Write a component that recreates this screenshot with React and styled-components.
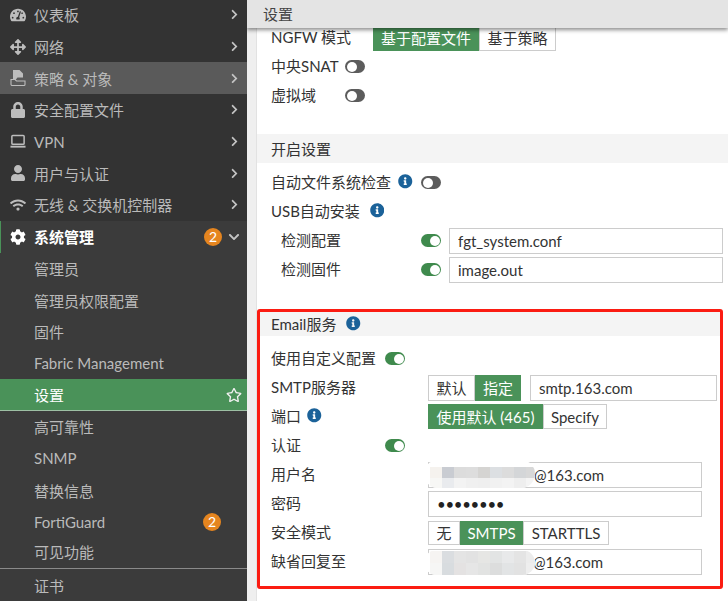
import React from 'react'
import styled, { createGlobalStyle } from 'styled-components'
import { FaTachometerAlt, FaArrowsAlt, FaLock, FaUser, FaWifi, FaCog, FaChevronRight, FaChevronDown, FaInfoCircle, FaRegStar } from 'react-icons/fa'

const Global = createGlobalStyle`
    html, body {
        margin: 0;
        height: 100%;
        overflow: hidden;
        background: #fff;
    }
    body, input {
        font-family: Lato, "Noto Sans CJK SC", sans-serif;
        font-size: 15px;
    }
`
const Page = styled.div`
    display: flex;
    width: 728px;
    height: 601px;
    overflow: hidden;
`
const Sidebar = styled.nav`
    width: 247px;
    flex: none;
    height: 601px;
    overflow: hidden;
    background: #333;
    color: #bababa;
`
const TopList = styled.div`
    margin-top: -1px;
`
const SubList = styled.div`
    background: #3b3b3b;
    padding-bottom: 40px;
`
const Item = styled.div`
    display: flex;
    align-items: center;
    box-sizing: border-box;
    height: 31.7px;
    padding-left: ${p => (p.$sub ? '34px' : '0')};
    padding-bottom: ${p => (p.$line ? '3px' : '0')};
    background: ${p => (p.$hover ? '#5a5a5a' : p.$active ? '#4a9259' : 'transparent')};
    color: ${p => (p.$active || p.$open ? '#fff' : 'inherit')};
    font-weight: ${p => (p.$open ? 700 : 400)};
    border-left: ${p => (p.$open ? '1px solid #4a9259' : 'none')};
    border-bottom: ${p => (p.$active ? '1px solid #9dbfa4' : p.$line ? '1px solid #8a8a8a' : 'none')};
`
const IconSlot = styled.span`
    width: 16px;
    margin-left: ${p => (p.$open ? '9px' : '10px')};
    margin-right: 8px;
    display: flex;
    justify-content: center;
    color: ${p => (p.$open ? '#fff' : '#bdbdbd')};
`
const ItemText = styled.span`
    flex: 1;
    white-space: nowrap;
`
const Badge = styled.span`
    width: 18px;
    height: 18px;
    border-radius: 50%;
    background: #e5851f;
    color: #fff;
    font-size: 14px;
    line-height: 18px;
    text-align: center;
    font-weight: 400;
    margin-right: ${p => (p.$plain ? '26px' : '5px')};
`
const Arrow = styled.span`
    width: 14px;
    margin-right: 6px;
    display: flex;
    justify-content: center;
    color: #c4c4c4;
`
const StarSlot = styled.span`
    margin-right: 5px;
    display: flex;
    color: #f2f2f2;
`
const Main = styled.main`
    flex: 1;
    min-width: 0;
    height: 601px;
    overflow: hidden;
    background: #efefef;
    color: #333;
`
const Header = styled.header`
    position: relative;
    z-index: 1;
    height: 28px;
    line-height: 28px;
    padding-left: 16px;
    background: #e4e4e4;
    color: #444;
    box-shadow: 0 2px 4px rgba(0, 0, 0, 0.45);
`
const Body = styled.div`
    margin-top: -5px;
    margin-left: 9px;
    height: 578px;
    background: #fff;
    border-left: 1px solid #e2e2e2;
`
const Rows = styled.div`
    padding-left: 14px;
    padding-right: 5px;
`
const Row = styled.div`
    display: flex;
    align-items: center;
    height: 29px;
    padding-left: ${p => p.$indent || 0}px;
`
const Label = styled.span`
    width: ${p => p.$w}px;
    flex: none;
    margin-top: -3px;
    white-space: nowrap;
    display: flex;
    align-items: center;
    gap: ${p => p.$gap || 0}px;
`
const SectionBar = styled.div`
    display: flex;
    align-items: center;
    box-sizing: border-box;
    height: ${p => p.$h}px;
    margin-top: ${p => p.$top || 0}px;
    padding-left: ${p => p.$pad}px;
    padding-bottom: ${p => p.$lift || 0}px;
    margin-bottom: 5px;
    background: #f4f4f4;
    gap: 10px;
`
const EmailBox = styled.section`
    margin: 25px 5px 0 0;
    border: 3px solid #fb1c12;
    border-radius: 3px;
    padding-bottom: 10px;
`
const EmailRows = styled.div`
    padding: 3px 0 0 11px;
`
const Info = styled(FaInfoCircle)`
    color: #1b6299;
    font-size: 14.5px;
    flex: none;
    margin-top: 1px;
`
const Toggle = styled.span`
    position: relative;
    display: block;
    flex: none;
    box-sizing: border-box;
    width: 20px;
    height: 13px;
    border-radius: 7px;
    background: ${p => (p.$on ? '#3f8a4d' : '#5c5c5c')};
    &::after {
        content: '';
        position: absolute;
        top: 1.5px;
        left: ${p => (p.$on ? '9px' : '1.5px')};
        width: 10px;
        height: 10px;
        border-radius: 50%;
        background: #fff;
    }
`
const Group = styled.div`
    display: flex;
    align-self: center;
    height: ${p => p.$h || 26}px;
    box-sizing: border-box;
`
const Seg = styled.span`
    display: flex;
    align-items: center;
    justify-content: center;
    box-sizing: border-box;
    width: ${p => p.$w}px;
    background: ${p => (p.$on ? '#4a9259' : '#fff')};
    color: ${p => (p.$on ? '#fff' : '#333')};
    border: 1px solid ${p => (p.$on ? '#4a9259' : '#ccc')};
    white-space: nowrap;
`
const Field = styled.div`
    position: relative;
    flex: none;
    width: ${p => p.$w}px;
    margin-left: ${p => p.$left || 0}px;
`
const Input = styled.input`
    display: block;
    width: 100%;
    height: 26px;
    box-sizing: border-box;
    border: 1px solid #ccc;
    border-radius: 0;
    outline: none;
    padding: 0 8px 0 ${p => p.$pad || 8}px;
    color: ${p => (p.type === 'password' ? '#222' : '#333')};
    background: #fff;
    letter-spacing: ${p => (p.type === 'password' ? '-0.3px' : '0')};
`
const Blob = styled.div`
    position: absolute;
    left: -4px;
    top: ${p => p.$top}px;
    width: 111px;
    height: ${p => p.$h}px;
    box-sizing: border-box;
    padding: ${p => p.$pad}px 0 0 6px;
    background: #fff;
    border-radius: 14px;
    overflow: hidden;
`
const MosaicGrid = styled.div`
    display: grid;
    grid-template-columns: repeat(9, 12px);
    grid-auto-rows: ${p => p.$cell}px;
`
const Cell = styled.span`
    background: ${p => p.$c};
`

const PolicyIcon = () => (
    <svg width="16" height="16" viewBox="0 0 16 16" fill="none">
        <path d="M3 0h6.5L13 3.5V7.5H7.5L5.5 10H3z" fill="#bdbdbd" />
        <path d="M1 9.5h4l1.5 1.5h8.5v3.5a1 1 0 0 1-1 1H2a1 1 0 0 1-1-1z" stroke="#bdbdbd" strokeWidth="1.1" />
    </svg>
)
const LaptopIcon = () => (
    <svg width="17" height="15" viewBox="0 0 17 15" fill="none">
        <rect x="2" y="1" width="13" height="9.5" rx="1" stroke="#bdbdbd" strokeWidth="1.6" />
        <path d="M0.5 13h16" stroke="#bdbdbd" strokeWidth="2" />
    </svg>
)

const topItems = [
    { text: '仪表板', icon: <FaTachometerAlt size={16} /> },
    { text: '网络', icon: <FaArrowsAlt size={16} /> },
    { text: '策略 & 对象', icon: <PolicyIcon />, hover: true },
    { text: '安全配置文件', icon: <FaLock size={16} /> },
    { text: 'VPN', icon: <LaptopIcon /> },
    { text: '用户与认证', icon: <FaUser size={16} /> },
    { text: '无线 & 交换机控制器', icon: <FaWifi size={16} /> },
]
const subItems = ['管理员', '管理员权限配置', '固件', 'Fabric Management', '设置', '高可靠性', 'SNMP', '替换信息', 'FortiGuard', '可见功能', '证书']

const mosaicOne = [
    '#f5f2ee', '#c9ccd2', '#dcdcdc', '#dddddd', '#d5d4d2', '#dcdfe2', '#dcdcdc', '#d4d6d8', '#d8d8d8',
    '#f7f7f5', '#e9ebee', '#f3f3f3', '#f0f0f0', '#efefef', '#f1f1f1', '#f3f3f3', '#eeeeee', '#f4f4f4',
]
const mosaicTwo = [
    '#f6f4f2', '#dadde0', '#e4e4e4', '#e2e2e2', '#e6e6e4', '#e2e4e4', '#e8e9ea', '#e4e4e4', '#ececec',
    '#f6f6f5', '#d8dcdf', '#e4e2e2', '#e6e6e6', '#e2e3e2', '#dcdddd', '#e2e4e5', '#e2e2e2', '#eeeeee',
]

const Mosaic = ({ cells, top, h, pad, cell }) => (
    <Blob $top={top} $h={h} $pad={pad}>
        <MosaicGrid $cell={cell}>
            {cells.map((c, i) => <Cell key={i} $c={c} />)}
        </MosaicGrid>
    </Blob>
)

const Segments = ({ items, h }) => (
    <Group $h={h}>
        {items.map(s => <Seg key={s.text} $w={s.w} $on={s.on}>{s.text}</Seg>)}
    </Group>
)

const App = () => {
    return (
        <Page>
            <Global />
            <Sidebar>
                <TopList>
                    {topItems.map(item => (
                        <Item key={item.text} $hover={item.hover}>
                            <IconSlot>{item.icon}</IconSlot>
                            <ItemText>{item.text}</ItemText>
                            <Arrow><FaChevronRight size={11} /></Arrow>
                        </Item>
                    ))}
                </TopList>
                <SubList>
                    <Item $open>
                        <IconSlot $open><FaCog size={16} /></IconSlot>
                        <ItemText>系统管理</ItemText>
                        <Badge>2</Badge>
                        <Arrow><FaChevronDown size={12} /></Arrow>
                    </Item>
                    {subItems.map(text => (
                        <Item key={text} $sub $active={text === '设置'} $line={text === '可见功能'}>
                            <ItemText>{text}</ItemText>
                            {text === '设置' && <StarSlot><FaRegStar size={16} /></StarSlot>}
                            {text === 'FortiGuard' && <Badge $plain>2</Badge>}
                        </Item>
                    ))}
                </SubList>
            </Sidebar>
            <Main>
                <Header>设置</Header>
                <Body>
                    <Rows>
                        <Row>
                            <Label $w={102}>NGFW 模式</Label>
                            <Segments items={[
                                { text: '基于配置文件', w: 106, on: true },
                                { text: '基于策略', w: 77 },
                            ]} />
                        </Row>
                        <Row>
                            <Label $w={74}>中央SNAT</Label>
                            <Toggle />
                        </Row>
                        <Row>
                            <Label $w={74}>虚拟域</Label>
                            <Toggle />
                        </Row>
                    </Rows>
                    <SectionBar $h={29} $top={24} $pad={14}>开启设置</SectionBar>
                    <Rows>
                        <Row>
                            <Label $w={150} $gap={7}>自动文件系统检查 <Info /></Label>
                            <Toggle />
                        </Row>
                        <Row>
                            <Label $w={150} $gap={10}>USB自动安装 <Info /></Label>
                        </Row>
                        <Row $indent={10}>
                            <Label $w={140}>检测配置</Label>
                            <Toggle $on />
                            <Field $w={274} $left={8}><Input readOnly value="fgt_system.conf" /></Field>
                        </Row>
                        <Row $indent={10}>
                            <Label $w={140}>检测固件</Label>
                            <Toggle $on />
                            <Field $w={274} $left={8}><Input readOnly value="image.out" /></Field>
                        </Row>
                    </Rows>
                    <EmailBox>
                        <SectionBar $h={24} $pad={11} $lift={2}>Email服务 <Info /></SectionBar>
                        <EmailRows>
                            <Row>
                                <Label $w={114}>使用自定义配置</Label>
                                <Toggle $on />
                            </Row>
                            <Row>
                                <Label $w={157}>SMTP服务器</Label>
                                <Segments items={[
                                    { text: '默认', w: 47 },
                                    { text: '指定', w: 46, on: true },
                                ]} />
                                <Field $w={187} $left={9}><Input readOnly value="smtp.163.com" /></Field>
                            </Row>
                            <Row>
                                <Label $w={157} $gap={6}>端口 <Info /></Label>
                                <Segments h={25} items={[
                                    { text: '使用默认 (465)', w: 115, on: true },
                                    { text: 'Specify', w: 64 },
                                ]} />
                            </Row>
                            <Row>
                                <Label $w={114}>认证</Label>
                                <Toggle $on />
                            </Row>
                            <Row>
                                <Label $w={157}>用户名</Label>
                                <Field $w={274}>
                                    <Input readOnly $pad={105} value="@163.com" />
                                    <Mosaic cells={mosaicOne} top={-2} h={28} pad={7} cell={11} />
                                </Field>
                            </Row>
                            <Row>
                                <Label $w={157}>密码</Label>
                                <Field $w={274}><Input readOnly type="password" value="12345678" /></Field>
                            </Row>
                            <Row>
                                <Label $w={157}>安全模式</Label>
                                <Segments h={24} items={[
                                    { text: '无', w: 32 },
                                    { text: 'SMTPS', w: 63, on: true },
                                    { text: 'STARTTLS', w: 86 },
                                ]} />
                            </Row>
                            <Row>
                                <Label $w={157}>缺省回复至</Label>
                                <Field $w={274}>
                                    <Input readOnly $pad={104} value="@163.com" />
                                    <Mosaic cells={mosaicTwo} top={1} h={25} pad={1} cell={12} />
                                </Field>
                            </Row>
                        </EmailRows>
                    </EmailBox>
                </Body>
            </Main>
        </Page>
    )
}

export default App
